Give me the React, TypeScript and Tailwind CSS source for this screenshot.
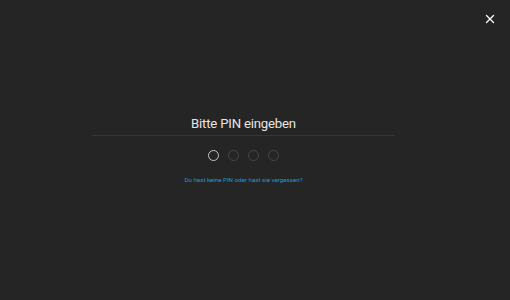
import { X } from "lucide-react";

const digits = [0, 1, 2, 3];

export default function App() {
    const filled = 0;

    return (
        <div className="relative w-[510px] h-[300px] bg-[#252525] font-['Roboto',Arial,sans-serif] overflow-hidden">
            {/* Close button */}
            <button className="absolute right-[13px] top-[12px] text-white">
                <X size={14} strokeWidth={2.2} />
            </button>

            <div className="flex flex-col items-center pt-[115px] pr-[23px]">
                <h1 className="text-[13.2px] tracking-[-0.2px] leading-[18px] text-[#e6e6e6]">Bitte PIN eingeben</h1>
                <div className="mt-[2px] w-[303px] h-px bg-[#363636]" />

                {/* PIN dots */}
                <div className="flex gap-[9px] mt-[14px]">
                    {digits.map((d) => (
                        <span
                            key={d}
                            className={`w-[11px] h-[11px] rounded-full border-[1.5px] ${
                                d === filled ? "border-[#c8c8c8]" : "border-[#474747]"
                            }`}
                        />
                    ))}
                </div>

                <a className="mt-[15px] text-[6.2px] leading-[9px] text-[#1a9ad6] cursor-pointer">
                    Du hast keine PIN oder hast sie vergessen?
                </a>
            </div>
        </div>
    );
}
